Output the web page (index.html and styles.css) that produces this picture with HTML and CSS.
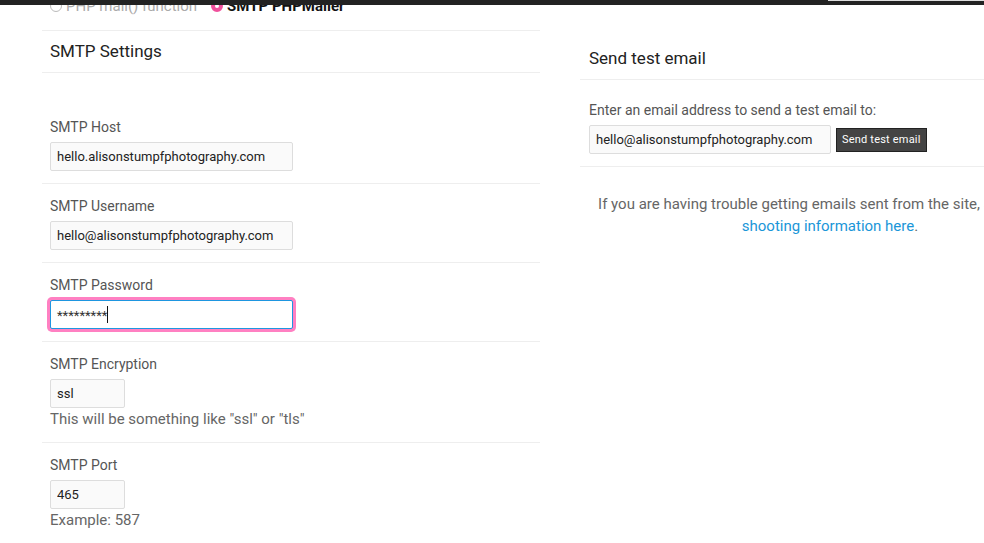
FILE: index.html
```html
<!DOCTYPE html>
<html>
<head>
<meta charset="utf-8">
<link rel="stylesheet" href="styles.css">
</head>
<body>
<div class="adminbar"><div class="adminbar-search"></div></div>
<div class="page">
  <div class="col-left">
    <div class="radio-row">
      <label class="radio"><span class="dot"></span><span class="radio-text">PHP mail() function</span></label>
      <label class="radio radio-on"><span class="dot"></span><span class="radio-text">SMTP PHPMailer</span></label>
    </div>
    <div class="box-head">SMTP Settings</div>
    <div class="field field-first">
      <div class="label">SMTP Host</div>
      <input class="input input-wide" type="text" value="hello.alisonstumpfphotography.com">
    </div>
    <div class="field">
      <div class="label">SMTP Username</div>
      <input class="input input-wide" type="text" value="hello@alisonstumpfphotography.com">
    </div>
    <div class="field">
      <div class="label">SMTP Password</div>
      <div class="input input-wide input-focus"><span class="stars">*********</span><span class="caret"></span></div>
    </div>
    <div class="field">
      <div class="label">SMTP Encryption</div>
      <input class="input input-short" type="text" value="ssl">
      <div class="help">This will be something like "ssl" or "tls"</div>
    </div>
    <div class="field field-last">
      <div class="label">SMTP Port</div>
      <input class="input input-short" type="text" value="465">
      <div class="help">Example: 587</div>
    </div>
  </div>
  <div class="col-right">
    <div class="box-head box-head-right">Send test email</div>
    <div class="test-field">
      <div class="label">Enter an email address to send a test email to:</div>
      <div class="test-row">
        <input class="input input-test" type="text" value="hello@alisonstumpfphotography.com">
        <button class="btn">Send test email</button>
      </div>
    </div>
    <p class="trouble">If you are having trouble getting emails sent from the site, see trouble-<a href="#" class="link">shooting information here</a>.</p>
  </div>
</div>
</body>
</html>
```
FILE: styles.css
```css
* { box-sizing: border-box; }
html, body { margin: 0; padding: 0; }
body {
  background: #fff;
  font-family: Roboto, "Liberation Sans", sans-serif;
  color: #555;
  width: 984px;
  height: 543px;
  overflow: hidden;
  position: relative;
}
.adminbar {
  position: absolute;
  top: 0; left: 0; right: 0;
  height: 5px;
  background: #222;
  z-index: 10;
}
.adminbar-search {
  position: absolute;
  top: 0; left: 828px; right: 0;
  height: 1px;
  background: #ddd;
}
.page {
  display: flex;
  gap: 40px;
  padding-left: 42px;
  margin-top: -6px;
}
.col-left { width: 498px; flex: none; }
.col-right { width: 500px; flex: none; margin-top: 44px; }

.radio-row {
  display: flex;
  gap: 14px;
  padding: 0 8px;
  height: 36px;
  align-items: flex-start;
  font-size: 15px;
  line-height: 24px;
}
.radio { display: flex; align-items: center; gap: 4px; color: #aaa; }
.radio .dot {
  width: 12px; height: 12px; border-radius: 50%;
  border: 1px solid #bbb; background: #fff;
}
.radio-on { color: #111; font-weight: bold; }
.radio-on .dot { border: 4px solid #f0509c; }

.box-head {
  border-top: 1px solid #eee;
  border-bottom: 1px solid #eee;
  padding: 8px 8px;
  font-size: 17px;
  line-height: 25px;
  color: #222;
}
.box-head-right { border-top: 0; padding: 8px 9px; }

.field {
  border-bottom: 1px solid #eee;
  padding: 12px 8px 12px;
}
.field-first { padding-top: 44px; }
.field-last { border-bottom: 0; }
.label {
  font-size: 14px;
  line-height: 20px;
  color: #555;
  margin-bottom: 5px;
}
.input {
  display: block;
  height: 29px;
  border: 1px solid #ddd;
  border-radius: 2px;
  background: #fafafa;
  font-family: Roboto, "Liberation Sans", sans-serif;
  font-size: 13px;
  color: #222;
  padding: 0 6px;
  margin: 0;
  outline: none;
}
.input-wide { width: 243px; }
.input-short { width: 75px; }
.input-focus {
  display: flex;
  align-items: center;
  background: #fff;
  border: 1px solid #1e96e0;
  box-shadow: 0 0 0 3px #ff80c2;
  border-radius: 2px;
}
.stars { font-size: 13px; color: #333; letter-spacing: 0; line-height: 14px; padding-top: 3px; }
.caret { width: 1px; height: 17px; background: #111; }
.help {
  font-size: 15px;
  line-height: 22px;
  color: #666;
}

.test-field {
  border-bottom: 1px solid #eee;
  padding: 20px 9px 12px;
}
.test-row { display: flex; align-items: center; gap: 5px; }
.input-test { width: 242px; height: 29px; }
.btn {
  height: 24px;
  background: #444;
  border: 1px solid #222;
  color: #fff;
  font-family: Roboto, "Liberation Sans", sans-serif;
  font-size: 11px;
  letter-spacing: 0.2px;
  padding: 0 5px;
  border-radius: 0;
}
.trouble {
  margin: 26px 0 0;
  text-align: center;
  font-size: 15px;
  line-height: 22px;
  color: #666;
}
.link { color: #1a96d8; text-decoration: none; }
```
